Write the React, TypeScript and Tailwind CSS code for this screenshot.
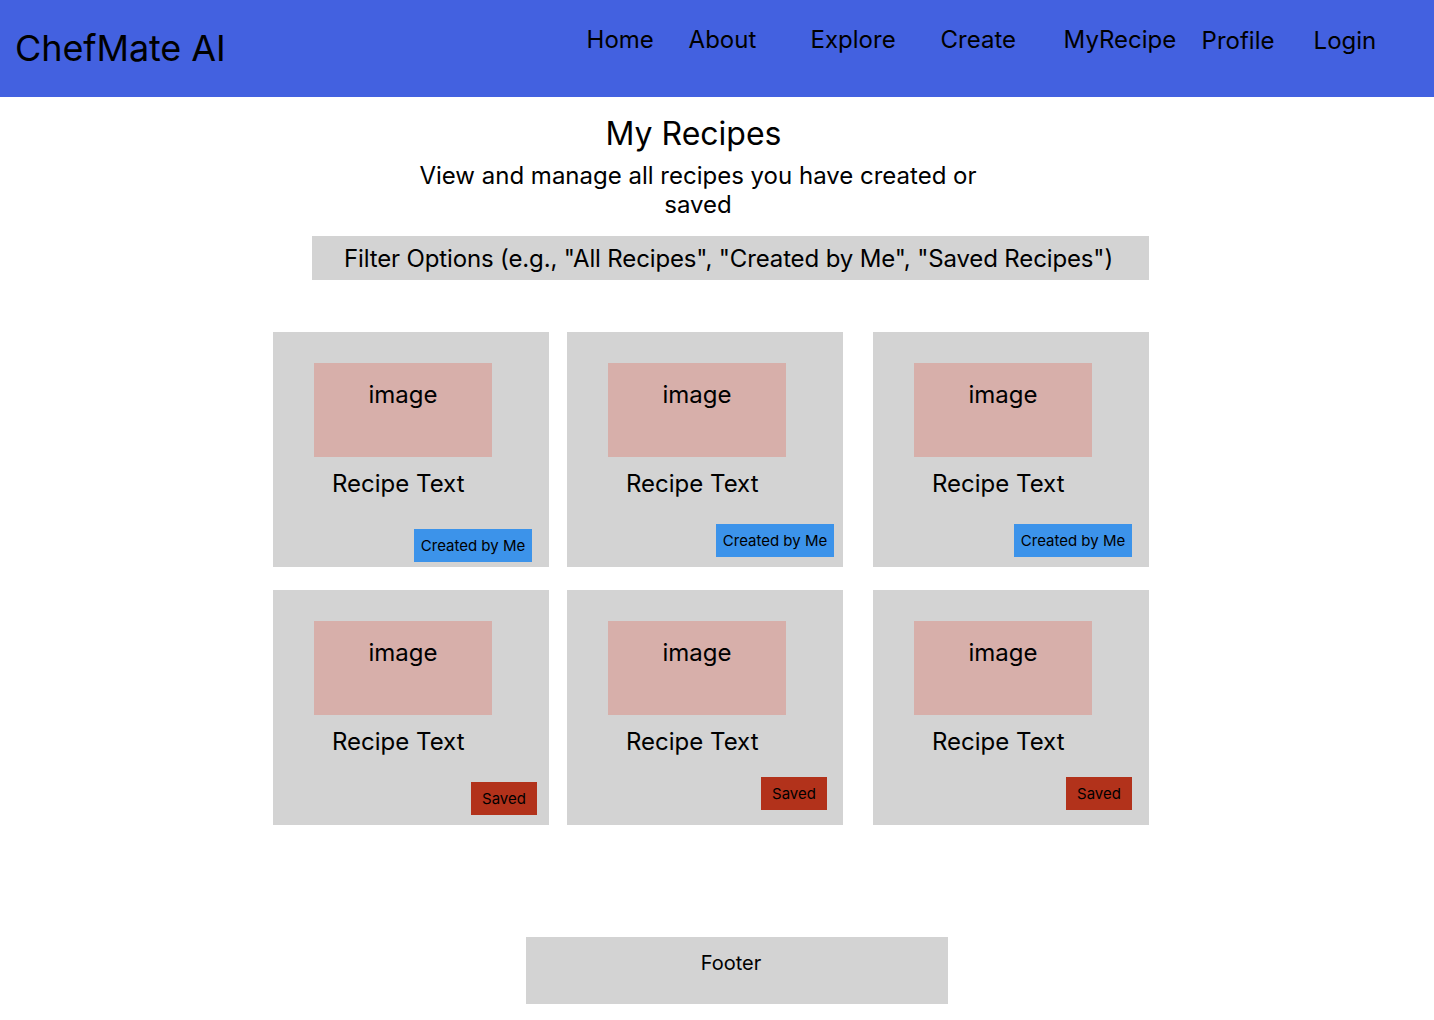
import React from 'react'

const navItems = [
  { label: 'Home', cls: 'w-[102px]' },
  { label: 'About', cls: 'w-[122px]' },
  { label: 'Explore', cls: 'w-[130px]' },
  { label: 'Create', cls: 'w-[123px]' },
  { label: 'MyRecipe', cls: 'w-[138px]' },
  { label: 'Profile', cls: 'w-[112px] mt-px' },
  { label: 'Login', cls: 'w-[80px] mt-px' },
]

type Recipe = {
  kind: 'created' | 'saved'
  badgeWrap: string
}

const rowOne: Recipe[] = [
  { kind: 'created', badgeWrap: 'mr-[17px] mb-[5px]' },
  { kind: 'created', badgeWrap: 'mr-[9px] mb-[10px]' },
  { kind: 'created', badgeWrap: 'mr-[17px] mb-[10px]' },
]

const rowTwo: Recipe[] = [
  { kind: 'saved', badgeWrap: 'mr-[12px] mb-[10px]' },
  { kind: 'saved', badgeWrap: 'mr-[16px] mb-[15px]' },
  { kind: 'saved', badgeWrap: 'mr-[17px] mb-[15px]' },
]

const RecipeCard: React.FC<{ recipe: Recipe; className?: string }> = ({ recipe, className }) => {
  return (
    <div className={`flex flex-col w-[276px] h-[235px] bg-[#d3d3d3] ${className ?? ''}`}>
      <div className="mt-[31px] ml-[41px] w-[178px] h-[94px] bg-[#d7afaa] pt-[17px] text-center text-[24px] leading-[29px]">
        image
      </div>
      <p className="mt-[12px] ml-[59px] text-[24px] leading-[29px]">Recipe Text</p>
      <div className={`mt-auto flex justify-end ${recipe.badgeWrap}`}>
        {recipe.kind === 'created' ? (
          <span className="flex items-center justify-center w-[118px] h-[33px] pt-px bg-[#3c93ea] text-[15px]">
            Created by Me
          </span>
        ) : (
          <span className="flex items-center justify-center w-[66px] h-[33px] pt-[2px] bg-[#b2321b] text-[15px]">
            Saved
          </span>
        )}
      </div>
    </div>
  )
}

const MyRecipesPage: React.FC = () => {
  return (
    <div className="min-h-screen bg-white text-black font-['Inter','Noto_Sans',sans-serif]">
      {/* Header */}
      <header className="flex items-start h-[97px] bg-[#4361e0]">
        <div className="ml-[15px] mt-[26px] text-[36px] leading-[44px] tracking-[-0.1px]">ChefMate AI</div>
        <nav className="flex ml-[361px] mt-[25px]">
          {navItems.map((item) => (
            <a key={item.label} className={`block text-[24px] leading-[29px] ${item.cls}`}>
              {item.label}
            </a>
          ))}
        </nav>
      </header>

      {/* Title */}
      <div className="flex flex-col items-center">
        <h1 className="mt-[17px] ml-[-47px] text-[32px] leading-[39px]">My Recipes</h1>
        <p className="mt-[8px] ml-[-38px] w-[580px] text-center text-[24px] leading-[29px]">
          View and manage all recipes you have created or saved
        </p>
      </div>

      {/* Filter */}
      <div className="mt-[17px] ml-[312px] w-[837px] h-[44px] flex items-center justify-center pr-[4px] bg-[#d3d3d3] text-[24px] leading-[29px] tracking-[-0.14px]">
        Filter Options (e.g., "All Recipes", "Created by Me", "Saved Recipes")
      </div>

      {/* Grid */}
      <div className="mt-[52px] ml-[273px] flex flex-col gap-[23px]">
        <div className="flex">
          <RecipeCard recipe={rowOne[0]} />
          <RecipeCard recipe={rowOne[1]} className="ml-[18px]" />
          <RecipeCard recipe={rowOne[2]} className="ml-[30px]" />
        </div>
        <div className="flex">
          <RecipeCard recipe={rowTwo[0]} />
          <RecipeCard recipe={rowTwo[1]} className="ml-[18px]" />
          <RecipeCard recipe={rowTwo[2]} className="ml-[30px]" />
        </div>
      </div>

      {/* Footer */}
      <footer className="mt-[112px] ml-[526px] w-[422px] h-[67px] bg-[#d3d3d3] pt-[14px] pr-[12px] text-center text-[20px] leading-[24px]">
        Footer
      </footer>
    </div>
  )
}

export default MyRecipesPage
